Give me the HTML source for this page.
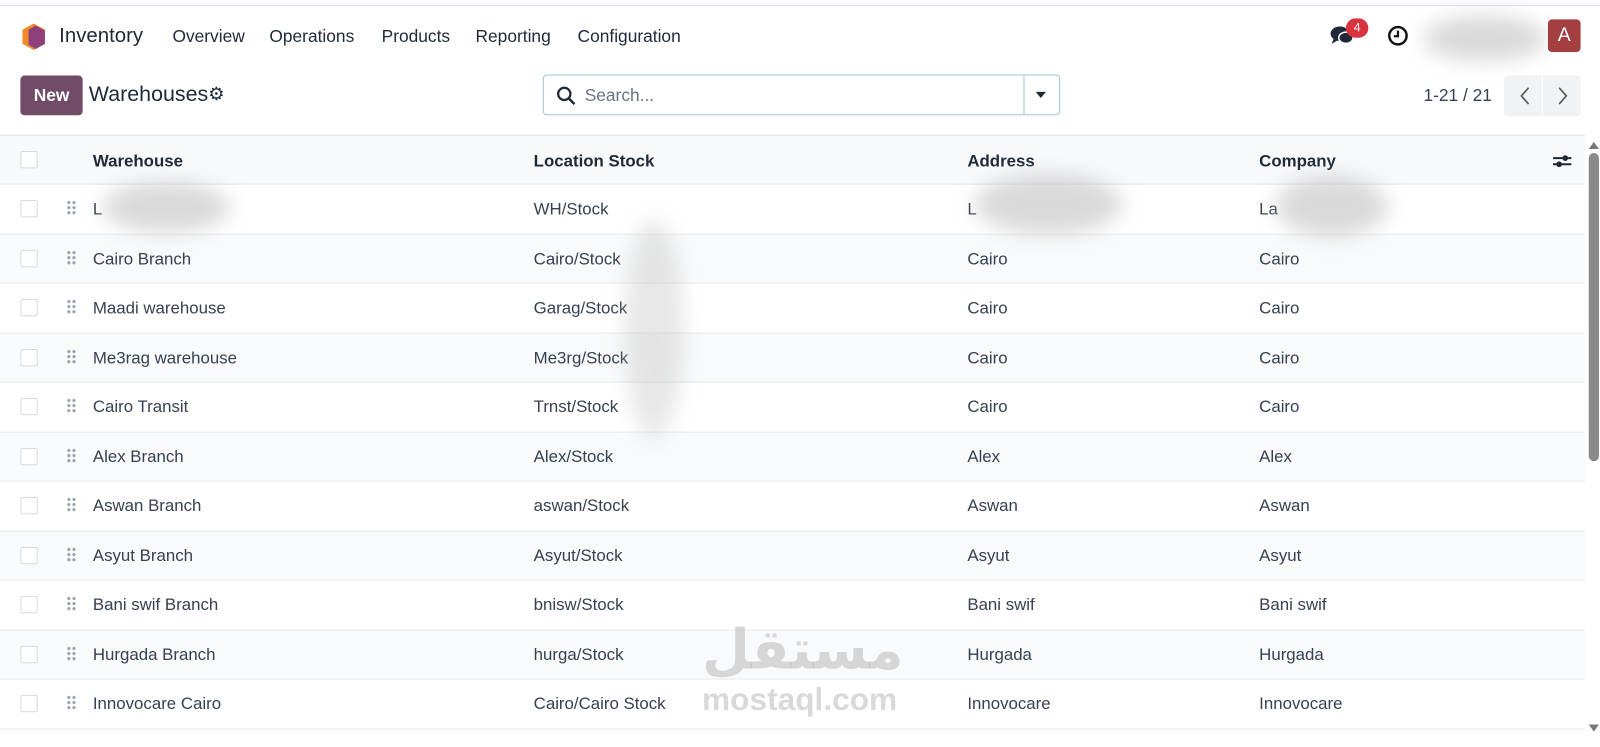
<!DOCTYPE html>
<html><head><meta charset="utf-8"><style>
*{box-sizing:border-box;margin:0;padding:0}
html,body{width:1600px;height:732px;overflow:hidden;background:#fff}
#w{position:absolute;left:0;top:0;width:1568px;height:718px;transform:scale(1.0204);transform-origin:0 0;font-family:"Liberation Sans","DejaVu Sans",sans-serif;color:#374151}
.top{position:absolute;top:0;left:0;right:0;height:6px;border-bottom:1px solid #e1dcef;background:#fbfbfd}
.nav{position:absolute;top:22px;font-size:17px;color:#1f2937}
.blur{position:absolute;background:#bbb;border-radius:50%;filter:blur(10px);opacity:.55}
.row{position:absolute;left:0;width:1553px;height:48.5px;border-bottom:1px solid #e5e7eb;font-size:16.5px;color:#374151}
.row span{position:absolute;top:15px}
.cb{position:absolute;left:20px;top:15px;width:17px;height:17px;border:1px solid #d8dadd;border-radius:2px;background:#fff}
.dh{position:absolute;left:65px;top:15px;width:10px;height:15px;background-image:radial-gradient(circle,#9ca3af 1.5px,transparent 1.7px);background-size:5px 5px}
</style></head><body><div id="w">
<div class="top"></div>
<svg style="position:absolute;left:20px;top:22px" width="26" height="28" viewBox="0 0 26 28"><polygon points="13,1 24,7 24,21 13,27 2,21 2,7" fill="#f08b2a"/><polygon points="15,3 24,8 24,21 15,26 8,22 8,7" fill="#8f3f79"/></svg>
<div class="nav" style="left:58px;font-size:20px;top:24px">Inventory</div>
<div class="nav" style="left:169px;top:26px">Overview</div>
<div class="nav" style="left:264px;top:26px">Operations</div>
<div class="nav" style="left:374px;top:26px">Products</div>
<div class="nav" style="left:466px;top:26px">Reporting</div>
<div class="nav" style="left:566px;top:26px">Configuration</div>
<svg style="position:absolute;left:1303px;top:24px" width="24" height="22" viewBox="0 0 24 22"><ellipse cx="10" cy="9" rx="9" ry="7" fill="#1f2937"/><path d="M4 14 L2 19 L9 15Z" fill="#1f2937"/><ellipse cx="16" cy="13" rx="7" ry="5.5" fill="#1f2937" stroke="#fff" stroke-width="1.5"/></svg>
<div style="position:absolute;left:1319px;top:18px;width:22px;height:19px;border-radius:10px;background:#d9333f;color:#fff;font-size:12px;text-align:center;line-height:19px">4</div>
<svg style="position:absolute;left:1359px;top:24px" width="22" height="22" viewBox="0 0 22 22"><circle cx="11" cy="11" r="8.5" fill="none" stroke="#111" stroke-width="2.4"/><path d="M11 6v5.5H7" fill="none" stroke="#111" stroke-width="2.2"/></svg>
<div class="blur" style="left:1395px;top:15px;width:120px;height:45px"></div>
<div style="position:absolute;left:1517px;top:19px;width:32px;height:32px;border-radius:4px;background:#a3403f;color:#fff;font-size:19px;text-align:center;line-height:32px">A</div>
<div style="position:absolute;left:20px;top:74px;width:61px;height:39px;border-radius:4px;background:#714b67;color:#fff;font-weight:bold;font-size:17px;text-align:center;line-height:39px">New</div>
<div style="position:absolute;left:87px;top:81px;font-size:21px;color:#1f2937">Warehouses</div>
<div style="position:absolute;left:204px;top:82px;font-size:18px;color:#1f2937">⚙</div>
<div style="position:absolute;left:532px;top:73px;width:507px;height:40px;border:1px solid #9fc6cc;border-radius:4px"></div>
<div style="position:absolute;left:1003px;top:74px;width:1px;height:38px;background:#9fc6cc"></div>
<svg style="position:absolute;left:545px;top:84px" width="20" height="20" viewBox="0 0 20 20"><circle cx="8" cy="8" r="6" fill="none" stroke="#1f2937" stroke-width="2.2"/><path d="M12.5 12.5L18 18" stroke="#1f2937" stroke-width="2.4"/></svg>
<div style="position:absolute;left:573px;top:84px;font-size:17px;color:#6b7280">Search...</div>
<div style="position:absolute;left:1015px;top:90px;border-left:5px solid transparent;border-right:5px solid transparent;border-top:6px solid #1f2937"></div>
<div style="position:absolute;left:1395px;top:84px;font-size:17px;color:#374151">1-21 / 21</div>
<div style="position:absolute;left:1474px;top:74px;width:75px;height:40px;background:#f1f2f4;border-radius:4px"></div>
<div style="position:absolute;left:1511px;top:74px;width:1px;height:40px;background:#fff"></div>
<svg style="position:absolute;left:1484px;top:82px" width="60" height="24" viewBox="0 0 60 24"><path d="M14 4L7 12L14 20" fill="none" stroke="#555" stroke-width="1.6"/><path d="M44 4L51 12L44 20" fill="none" stroke="#555" stroke-width="1.6"/></svg>
<div style="position:absolute;left:0;top:132px;width:1553px;height:49px;background:#f8f9fb;border-top:1px solid #dee2e6;border-bottom:1px solid #dee2e6;font-weight:bold;font-size:16.5px;color:#1f2937">
<div class="cb" style="top:15px"></div>
<span style="position:absolute;left:91px;top:16px">Warehouse</span>
<span style="position:absolute;left:523px;top:16px">Location Stock</span>
<span style="position:absolute;left:948px;top:16px">Address</span>
<span style="position:absolute;left:1234px;top:16px">Company</span>
<svg style="position:absolute;left:1521px;top:16px" width="20" height="18" viewBox="0 0 20 18"><path d="M1 6h18M1 12h18" stroke="#1f2937" stroke-width="2"/><circle cx="13" cy="6" r="2.8" fill="#1f2937"/><circle cx="7" cy="12" r="2.8" fill="#1f2937"/></svg>
</div>
<div id="rows"></div>
<div style="position:absolute;left:1555px;top:133px;width:13px;height:599px;background:#fff"></div>
<div style="position:absolute;left:1557px;top:139px;border-left:5px solid transparent;border-right:5px solid transparent;border-bottom:7px solid #777"></div>
<div style="position:absolute;left:1557px;top:150px;width:10px;height:302px;border-radius:5px;background:#8a8a8a"></div>
<div style="position:absolute;left:1557px;top:710px;border-left:5px solid transparent;border-right:5px solid transparent;border-top:7px solid #777"></div>
<div class="blur" style="left:100px;top:178px;width:125px;height:50px"></div>
<div class="blur" style="left:955px;top:170px;width:145px;height:60px"></div>
<div class="blur" style="left:1250px;top:172px;width:110px;height:60px"></div>
<div class="blur" style="left:612px;top:215px;width:58px;height:215px;opacity:.35"></div>
<div style="position:absolute;left:688px;top:605px;font-size:54px;font-weight:bold;color:rgba(170,170,170,.45);font-family:'DejaVu Sans',sans-serif">مستقل</div>
<div style="position:absolute;left:688px;top:668px;font-size:31px;font-weight:bold;color:rgba(170,170,170,.45)">mostaql.com</div>
<script>
var d=[["L","WH/Stock","L","La"],["Cairo Branch","Cairo/Stock","Cairo","Cairo"],["Maadi warehouse","Garag/Stock","Cairo","Cairo"],["Me3rag warehouse","Me3rg/Stock","Cairo","Cairo"],["Cairo Transit","Trnst/Stock","Cairo","Cairo"],["Alex Branch","Alex/Stock","Alex","Alex"],["Aswan Branch","aswan/Stock","Aswan","Aswan"],["Asyut Branch","Asyut/Stock","Asyut","Asyut"],["Bani swif Branch","bnisw/Stock","Bani swif","Bani swif"],["Hurgada Branch","hurga/Stock","Hurgada","Hurgada"],["Innovocare Cairo","Cairo/Cairo Stock","Innovocare","Innovocare"]];
var h="";d.forEach(function(r,i){h+='<div class="row" style="top:'+(181+i*48.5)+'px;background:'+(i%2?'#f9fafb':'#fff')+'"><div class="cb"></div><div class="dh"></div><span style="left:91px">'+r[0]+'</span><span style="left:523px">'+r[1]+'</span><span style="left:948px">'+r[2]+'</span><span style="left:1234px">'+r[3]+'</span></div>'});
document.getElementById("rows").outerHTML=h;
</script>
</div></body></html>
